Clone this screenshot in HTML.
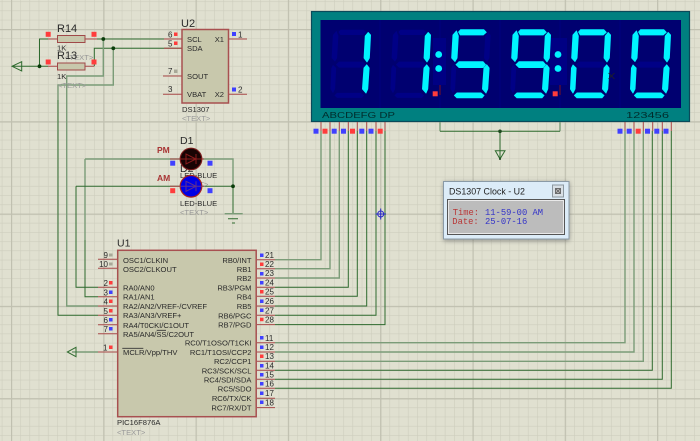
<!DOCTYPE html>
<html><head><meta charset="utf-8"><style>
html,body{margin:0;padding:0;background:#e0e0d0;width:700px;height:441px;overflow:hidden}
svg{display:block;filter:blur(.3px)}
text{font-family:"Liberation Sans",sans-serif;font-size:7.6px;fill:#2a2a2a}
.n text{font-size:8px}
.r{text-anchor:end}
text.g{fill:#999}
text.big{font-size:11px}
.w{fill:none;stroke:#2e6a2e;stroke-width:1}
.f{fill:none;stroke:#7b9c78;stroke-width:1.4}
.p{fill:none;stroke:#a84848;stroke-width:1}
.chip{fill:#c8c8ac;stroke:#a85050;stroke-width:1.5}
.b{fill:#4040ff}.e{fill:#ff3c3c}.y{fill:#a8a898}
.seg{fill:#00f4ff;stroke:#00f4ff;stroke-width:.8;stroke-linejoin:round}
.gh{fill:#000086}
text.m{font-family:"Liberation Mono",monospace;font-size:8.8px}
</style></head><body>
<svg width="700" height="441" viewBox="0 0 700 441" xmlns="http://www.w3.org/2000/svg">
<defs>
<pattern id="fine" x="1.77" y="1.3" width="9.23" height="9.23" patternUnits="userSpaceOnUse"><path d="M0 0V9.23M0 0H9.23" stroke="#cdcdbd" stroke-width="1.2" fill="none"/></pattern>
<pattern id="maj" x="11" y="29" width="92.3" height="92.3" patternUnits="userSpaceOnUse"><path d="M0 0V92.3M0 0H92.3" stroke="#c0c0b0" stroke-width="2.4" fill="none"/></pattern>
<polygon id="a" points="8.5,32 10.5,29.7 33.8,29.7 36.3,32.3 33.3,35 10.3,35"/>
<polygon id="b" points="35.2,36 38.2,32.4 40.6,35 39.4,58 37,62 34,58"/>
<polygon id="c" points="33.9,68 36.7,64.7 39.2,68 37.8,89 36,93.1 32.4,89"/>
<polygon id="d" points="4.4,95.4 7,92.9 31,92.9 34.1,95.4 32,97.9 7,97.9"/>
<polygon id="e2" points="1.4,68 3,64.9 6.2,68 5.1,89 3,93.1 .4,89"/>
<polygon id="f2" points="2.9,35 6.5,30.9 8.4,36 7.1,58 5,61.6 1.6,58"/>
<polygon id="g2" points="5.9,64.6 9,61.6 33,61.6 35.6,64.6 33,67.6 9,67.6"/>
<g id="ghost" class="gh"><use href="#a"/><use href="#b"/><use href="#c"/><use href="#d"/><use href="#e2"/><use href="#f2"/><use href="#g2"/></g>
<filter id="sh" x="-20%" y="-20%" width="140%" height="140%"><feGaussianBlur stdDeviation="2.5"/></filter>
</defs>
<rect width="700" height="441" fill="#e0e0d0"/>
<rect width="700" height="441" fill="url(#fine)"/>
<rect width="700" height="441" fill="url(#maj)"/>

<!-- display -->
<rect x="311.5" y="11.5" width="378" height="110" fill="#008080" stroke="#0a4a5a" stroke-width="1.2"/>
<rect x="320.5" y="20" width="360.5" height="88" fill="#000070"/>
<path d="M380 20V108M440 20V108M500 20V108M560 20V108M620 20V108" stroke="#00007e" stroke-width="1"/>
<rect x="433" y="38" width="13" height="47" fill="#000084"/>
<rect x="550" y="38" width="17" height="47" fill="#000084"/>
<use href="#ghost" x="330"/><use href="#ghost" x="390"/><use href="#ghost" x="450"/><use href="#ghost" x="510"/><use href="#ghost" x="570"/><use href="#ghost" x="630"/>
<g class="seg">
<g transform="translate(330 0)"><use href="#b"/><use href="#c"/></g>
<g transform="translate(390 0)"><use href="#b"/><use href="#c"/></g>
<g transform="translate(450 0)"><use href="#a"/><use href="#c"/><use href="#d"/><use href="#f2"/><use href="#g2"/></g>
<g transform="translate(510 0)"><use href="#a"/><use href="#b"/><use href="#c"/><use href="#d"/><use href="#f2"/><use href="#g2"/></g>
<g transform="translate(570 0)"><use href="#a"/><use href="#b"/><use href="#c"/><use href="#d"/><use href="#e2"/><use href="#f2"/></g>
<g transform="translate(630 0)"><use href="#a"/><use href="#b"/><use href="#c"/><use href="#d"/><use href="#e2"/><use href="#f2"/></g>
<circle cx="438.7" cy="54.5" r="3"/><circle cx="438.7" cy="68.5" r="3"/>
<circle cx="558" cy="54.5" r="3"/><circle cx="558" cy="68.5" r="3"/>
</g>
<rect x="432.7" y="91.3" width="5" height="5" fill="#ff3c3c"/><rect x="552.7" y="91.3" width="5" height="5" fill="#ff3c3c"/>
<path d="M440 85V95M560 85V95" stroke="#7a1020" stroke-width="1"/>
<path d="M608.5 73L614.5 79M614.5 73L608.5 79" stroke="#222" stroke-width=".8"/>
<text x="322" y="118" textLength="73" lengthAdjust="spacingAndGlyphs" style="font-size:8.3px;fill:#002c2c">ABCDEFG DP</text>
<text x="626" y="118" textLength="43" lengthAdjust="spacingAndGlyphs" style="font-size:8.3px;fill:#002c2c">123456</text>

<!-- display pins -->
<path class="p" d="M321 122V131M330 122V131M339.3 122V131M348.3 122V131M357.3 122V131M366.7 122V131M376 122V131M385 122V131M625 122V131M634 122V131M643.3 122V131M652.7 122V131M662.3 122V131M671.3 122V131"/>
<g>
<rect class="b" x="313.5" y="128.7" width="5" height="5"/><rect class="e" x="322.5" y="128.7" width="5" height="5"/><rect class="b" x="331.7" y="128.7" width="5" height="5"/><rect class="b" x="341" y="128.7" width="5" height="5"/><rect class="e" x="350" y="128.7" width="5" height="5"/><rect class="b" x="359.3" y="128.7" width="5" height="5"/><rect class="b" x="368.5" y="128.7" width="5" height="5"/><rect class="e" x="377.7" y="128.7" width="5" height="5"/>
<rect class="b" x="617.5" y="128.7" width="5" height="5"/><rect class="b" x="626.7" y="128.7" width="5" height="5"/><rect class="e" x="635.7" y="128.7" width="5" height="5"/><rect class="b" x="645" y="128.7" width="5" height="5"/><rect class="b" x="654.3" y="128.7" width="5" height="5"/><rect class="b" x="663.5" y="128.7" width="5" height="5"/>
</g>

<!-- display wires -->
<path class="f" d="M321 131V259.7H275M330 131V268.7H275M339.3 131V278H275"/>
<path class="w" d="M348.3 131V287.3H275M357.3 131V296.3H275M366.7 131V306H275M376 131V315.3H275M385 131V324.6H275"/>
<path class="f" d="M625 131V342.7H275M634 131V352H275M643.3 131V361.3H275"/>
<path class="w" d="M652.3 131V370.3H275M662.3 131V379.3H275M671.3 131V388.3H275"/>
<path class="f" d="M440 122V131.3M560 122V131.3"/>
<path class="w" d="M440 131.3H560M500 131.3V159M495.3 150.7H505L500 159Z"/>
<circle cx="500" cy="131.3" r="1.8" fill="#1e4a1e"/>
<circle cx="500" cy="159" r="1" fill="#1e4a1e"/>

<!-- U2 + resistors wires -->
<path class="w" d="M12 66.3H48M21.7 61.7L12 66.3L21.7 71ZM48 39H39.5V66.3M97 39H182M94.3 66.3V48.3H182"/>
<path class="f" d="M103.3 39V76H66.7V306H98M113.3 48.3V85H58V100M85 159V240M85 159H180M202 159H233V186"/>
<path class="w" d="M58 100V315.3H98M76 186.3V287.3H98M85 240V296.7H98M76 186.3H180M202 186.3H233M233 186V213"/>
<circle cx="39.5" cy="66.3" r="1.9" fill="#0a3c0a"/><circle cx="103.3" cy="39" r="1.9" fill="#0a3c0a"/><circle cx="113.3" cy="48.3" r="1.9" fill="#0a3c0a"/>
<circle cx="233" cy="186.3" r="1.9" fill="#0a3c0a"/>
<path d="M224.7 213.7H242.7" stroke="#7b9c78" stroke-width="1.4"/><path d="M228 218.7H238M232 223H235" stroke="#2e6a2e" stroke-width="1"/>

<!-- R14 / R13 -->
<rect x="57.5" y="35.5" width="27.5" height="7" fill="#c8c8ac" stroke="#a04848"/>
<rect x="57.5" y="63" width="27.5" height="7" fill="#c8c8ac" stroke="#a04848"/>
<path class="p" d="M48 39H57M85 39H97M48 66.3H57M85 66.3H94"/>
<rect class="e" x="45.7" y="31.8" width="5" height="5"/><rect class="e" x="91.5" y="31.8" width="5" height="5"/><rect class="e" x="45.7" y="59.5" width="5" height="5"/><rect class="e" x="91.5" y="59.5" width="5" height="5"/>
<text x="57" y="32" class="big">R14</text>
<text x="57" y="50.5">1K</text>
<text x="65" y="60" class="g">&lt;TEXT&gt;</text>
<text x="57" y="59" class="big">R13</text>
<text x="57" y="79">1K</text>
<text x="58" y="88" class="g">&lt;TEXT&gt;</text>

<!-- U2 -->
<rect class="chip" x="182" y="29.5" width="46.5" height="73.5"/>
<path class="p" d="M164 39H182M164 48.3H182M163 76H182M163 94.3H182M229 39H247M229 94.3H247"/>
<text x="181" y="27" style="font-size:11px">U2</text>
<text x="187" y="42">SCL</text><text x="187" y="51">SDA</text><text x="187" y="79">SOUT</text><text x="187" y="97">VBAT</text>
<text x="224" y="42" class="r">X1</text><text x="224" y="97" class="r">X2</text>
<g class="n"><text x="168" y="37.5">6</text><text x="168" y="46.5">5</text><text x="168" y="74">7</text><text x="168" y="92">3</text><text x="238" y="37.5">1</text><text x="238" y="92.5">2</text></g>
<rect class="e" x="174" y="32.5" width="3.5" height="3.5"/><rect class="e" x="174" y="41.5" width="3.5" height="3.5"/><rect class="y" x="174" y="69.5" width="3.5" height="3.5"/>
<rect class="b" x="232" y="32" width="4" height="4"/><rect class="b" x="232" y="87.5" width="4" height="4"/>
<text x="182" y="112">DS1307</text><text x="182" y="121" class="g">&lt;TEXT&gt;</text>

<!-- LEDs -->
<text x="180" y="144" style="font-size:10.5px">D1</text>
<text x="157" y="153" style="font-weight:bold;font-size:8.5px;fill:#a83434">PM</text>
<text x="157" y="181" style="font-weight:bold;font-size:8.5px;fill:#a83434">AM</text>
<text x="180" y="178">LED-BLUE</text>
<text x="180" y="172" style="font-size:10.5px">D2</text>
<text x="180" y="187" class="g">&lt;TEXT&gt;</text>
<circle cx="191" cy="159" r="10.8" fill="#180404" stroke="#7a1c1c" stroke-width="1.2"/>
<circle cx="191" cy="186.3" r="10.8" fill="#0000e6" stroke="#a82020" stroke-width="1.2"/>
<path d="M180 159H202M186 154V164L196 159ZM196 154V164" fill="none" stroke="#8a1c1c" stroke-width="1"/>
<path d="M170 186.3H180M202 186.3H204" stroke="#a84848" fill="none"/>
<path d="M170 159H180M202 159H204" stroke="#a84848" fill="none"/>
<path d="M180 186.3H202M186 181.3V191.3L196 186.3ZM196 181.3V191.3" fill="none" stroke="#603090" stroke-width="1"/>
<rect class="b" x="170.2" y="160.7" width="5" height="5"/><rect class="b" x="207.5" y="160.7" width="5" height="5"/><rect class="e" x="170.2" y="188.2" width="5" height="5"/><rect class="b" x="207.5" y="188.2" width="5" height="5"/>
<text x="180" y="206">LED-BLUE</text><text x="180" y="215" class="g">&lt;TEXT&gt;</text>

<!-- crosshair -->
<g fill="none" stroke="#2828c8" stroke-width="1"><circle cx="380.7" cy="214" r="3"/><path d="M380.7 208.5V219.5M375.5 214H386"/></g>

<!-- U1 -->
<text x="117" y="246.5" style="font-size:10.5px">U1</text>
<rect class="chip" x="117.7" y="250.3" width="138.5" height="166.4"/>
<path class="p" d="M98 259.3H117M98 268.3H117M98 287.3H117M98 296.7H117M98 306H117M98 315.3H117M98 324.7H117M98 333.7H117M98 352H117"/>
<path class="p" d="M257 259.7H275M257 268.7H275M257 278H275M257 287.3H275M257 296.3H275M257 306H275M257 315.3H275M257 324.6H275M257 342.7H275M257 352H275M257 361.3H275M257 370.3H275M257 379.3H275M257 388.3H275M257 398.3H275M257 407.6H275"/>
<path class="f" d="M72 352H98"/>
<path class="w" d="M76 347.3L67.3 352L76 356.7Z"/>
<text x="123" y="263">OSC1/CLKIN</text>
<text x="123" y="272">OSC2/CLKOUT</text>
<text x="123" y="290.5">RA0/AN0</text>
<text x="123" y="299.5">RA1/AN1</text>
<text x="123" y="309" textLength="84" lengthAdjust="spacing">RA2/AN2/VREF-/CVREF</text>
<text x="123" y="318">RA3/AN3/VREF+</text>
<text x="123" y="328" textLength="66" lengthAdjust="spacing">RA4/T0CKI/C1OUT</text>
<text x="123" y="337" textLength="71" lengthAdjust="spacing">RA5/AN4/SS/C2OUT</text>
<path d="M156.7 330.3H166M122.3 348.3H143.3" stroke="#333" stroke-width=".8"/>
<text x="123" y="355">MCLR/Vpp/THV</text>
<text x="251.5" y="263" class="r">RB0/INT</text>
<text x="251.5" y="272" class="r">RB1</text>
<text x="251.5" y="281" class="r">RB2</text>
<text x="251.5" y="290.5" class="r">RB3/PGM</text>
<text x="251.5" y="299.5" class="r">RB4</text>
<text x="251.5" y="309" class="r">RB5</text>
<text x="251.5" y="318.5" class="r">RB6/PGC</text>
<text x="251.5" y="327.5" class="r">RB7/PGD</text>
<text x="251.5" y="345.5" class="r">RC0/T1OSO/T1CKI</text>
<text x="251.5" y="355" class="r">RC1/T1OSI/CCP2</text>
<text x="251.5" y="364" class="r">RC2/CCP1</text>
<text x="251.5" y="373.5" class="r">RC3/SCK/SCL</text>
<text x="251.5" y="382.5" class="r">RC4/SDI/SDA</text>
<text x="251.5" y="391.5" class="r">RC5/SDO</text>
<text x="251.5" y="401" class="r">RC6/TX/CK</text>
<text x="251.5" y="410.5" class="r">RC7/RX/DT</text>
<text x="117" y="425">PIC16F876A</text>
<text x="117" y="435" class="g">&lt;TEXT&gt;</text>
<!-- left numbers -->
<g class="n"><text x="108" y="258" class="r">9</text><text x="108" y="267" class="r">10</text><text x="108" y="286" class="r">2</text><text x="108" y="295.5" class="r">3</text><text x="108" y="304.5" class="r">4</text><text x="108" y="314" class="r">5</text><text x="108" y="323" class="r">6</text><text x="108" y="332" class="r">7</text><text x="107.5" y="350.5" class="r">1</text></g>
<g>
<rect class="y" x="109" y="253.5" width="3.5" height="3"/><rect class="y" x="109" y="262.5" width="3.5" height="3"/><rect class="e" x="109" y="281" width="3.5" height="3.5"/><rect class="b" x="109" y="290.5" width="3.5" height="3.5"/><rect class="e" x="109" y="299.5" width="3.5" height="3.5"/><rect class="e" x="109" y="309" width="3.5" height="3.5"/><rect class="b" x="109" y="318" width="3.5" height="3.5"/><rect class="b" x="109" y="327" width="3.5" height="3.5"/><rect class="e" x="109" y="345.5" width="3.5" height="3.5"/>
</g>
<!-- right numbers -->
<g class="n"><text x="265" y="258">21</text><text x="265" y="267">22</text><text x="265" y="276">23</text><text x="265" y="285.5">24</text><text x="265" y="294.5">25</text><text x="265" y="304">26</text><text x="265" y="313.5">27</text><text x="265" y="322.5">28</text>
<text x="265" y="341">11</text><text x="265" y="350">12</text><text x="265" y="359">13</text><text x="265" y="368.5">14</text><text x="265" y="377.5">15</text><text x="265" y="386.5">16</text><text x="265" y="396">17</text><text x="265" y="405.5">18</text></g>
<g>
<rect class="b" x="260" y="253.5" width="3.5" height="3.5"/><rect class="e" x="260" y="262.5" width="3.5" height="3.5"/><rect class="b" x="260" y="272" width="3.5" height="3.5"/><rect class="b" x="260" y="281" width="3.5" height="3.5"/><rect class="e" x="260" y="290" width="3.5" height="3.5"/><rect class="b" x="260" y="299.5" width="3.5" height="3.5"/><rect class="b" x="260" y="308.5" width="3.5" height="3.5"/><rect class="e" x="260" y="317.7" width="3.5" height="3.5"/>
<rect class="b" x="260" y="336" width="3.5" height="3.5"/><rect class="b" x="260" y="345.5" width="3.5" height="3.5"/><rect class="e" x="260" y="354.5" width="3.5" height="3.5"/><rect class="b" x="260" y="364" width="3.5" height="3.5"/><rect class="b" x="260" y="373" width="3.5" height="3.5"/><rect class="b" x="260" y="382" width="3.5" height="3.5"/><rect class="b" x="260" y="391.5" width="3.5" height="3.5"/><rect class="b" x="260" y="400.5" width="3.5" height="3.5"/>
</g>

<!-- popup -->
<rect x="443.5" y="182" width="126" height="59" fill="#555" opacity=".55" filter="url(#sh)"/>
<rect x="443.5" y="181.5" width="125.5" height="57.5" fill="#dcecf8" stroke="#8a9aa6"/>
<text x="449" y="194.5" style="font-size:9.5px;fill:#222" textLength="76" lengthAdjust="spacingAndGlyphs">DS1307 Clock - U2</text>
<rect x="552.5" y="185" width="11" height="12" fill="#d8e0e6" stroke="#8c98a0"/>
<rect x="555.5" y="188.5" width="5" height="5" fill="#bbb" stroke="#555" stroke-width=".8"/>
<path d="M555.5 188.5l5 5m0-5l-5 5" stroke="#555" stroke-width=".7"/>
<rect x="447.5" y="199.5" width="117" height="35" fill="#bcbcbc" stroke="#555" stroke-width="1"/>
<rect x="448.5" y="200.5" width="115" height="33" fill="none" stroke="#f4f4f4" stroke-width=".8"/>
<text x="452.7" y="215" class="m" style="fill:#b83838">Time:</text>
<text x="485" y="215" class="m" style="fill:#3434c8">11-59-00 AM</text>
<text x="452.3" y="223.8" class="m" style="fill:#b83838">Date:</text>
<text x="485" y="223.8" class="m" style="fill:#3434c8">25-07-16</text>
</svg>
</body></html>
